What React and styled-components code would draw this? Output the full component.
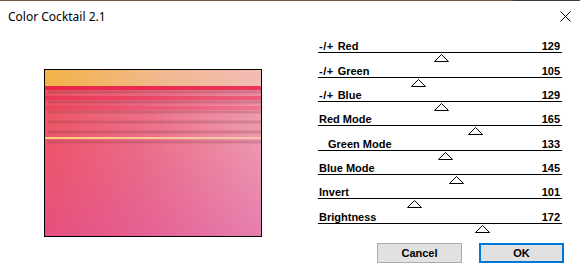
import React from "react";
import styled, { createGlobalStyle } from "styled-components";

const GlobalStyle = createGlobalStyle`
  html, body {
    margin: 0;
    padding: 0;
    background: #ffffff;
  }
  body {
    font-family: "Liberation Sans", Arial, sans-serif;
  }
`;

const Window = styled.div`
  width: 580px;
  height: 273px;
  background: #ffffff;
  display: flex;
  flex-direction: column;
  overflow: hidden;
`;

const TopEdge = styled.div`
  height: 1px;
  background: linear-gradient(to right, #6d5a49 513px, #3d3d3d 513px);
`;

const TitleBar = styled.div`
  height: 31px;
  display: flex;
  align-items: center;
  justify-content: space-between;
  padding: 0 9px 0 8px;
`;

const Title = styled.span`
  font-family: "Noto Sans", "Open Sans", sans-serif;
  font-size: 12px;
  color: #000000;
`;

const CloseIcon = styled.svg`
  width: 11px;
  height: 11px;
  display: block;
`;

const Main = styled.div`
  display: flex;
  align-items: flex-start;
  padding-left: 44px;
  gap: 56px;
`;

// thumbnail of the filtered image: bands and stripes from the effect
const Preview = styled.div`
  margin-top: 37px;
  width: 216px;
  height: 166px;
  border: 1px solid #000000;
  background-image:
    linear-gradient(to right, #f3b246, #f0b98f 55%, #f2bcb6),
    linear-gradient(to right, #fbd07a, #f7c99a 60%, #f4c5b4),
    repeating-linear-gradient(
      to bottom,
      transparent 0px,
      transparent 4px,
      rgba(120, 55, 70, 0.22) 5px,
      rgba(120, 55, 70, 0.26) 6px,
      rgba(120, 55, 70, 0.22) 7px,
      transparent 8px,
      transparent 10px
    ),
    linear-gradient(
      to bottom,
      rgba(232, 20, 60, 0.75) 0px,
      rgba(232, 20, 60, 0.75) 4px,
      rgba(220, 60, 80, 0.15) 4px,
      rgba(220, 60, 80, 0.15) 10px,
      rgba(232, 30, 70, 0.5) 10px,
      rgba(232, 30, 70, 0.5) 14px,
      rgba(232, 30, 70, 0.1) 14px,
      rgba(232, 30, 70, 0.1) 20px,
      rgba(232, 30, 70, 0.3) 20px,
      rgba(232, 30, 70, 0.3) 24px,
      transparent 24px
    ),
    linear-gradient(to bottom, rgba(226, 80, 160, 0) 35%, rgba(214, 70, 170, 0.35)),
    linear-gradient(to right, #ed5565, #ec6e86 45%, #ee9cb0);
  background-size:
    100% 16px,
    100% 2px,
    calc(100% - 3px) 60px,
    100% 30px,
    100% 100%,
    100% 100%;
  background-position:
    0 0,
    0 67px,
    3px 16px,
    0 16px,
    0 0,
    0 0;
  background-repeat: no-repeat;
`;

const Panel = styled.div`
  margin-top: 8px;
  width: 244px;
  display: flex;
  flex-direction: column;
`;

const Sliders = styled.div`
  display: grid;
  grid-template-rows: 25px 24px 24px 25px 24px 24px 25px 24px;
`;

const Slider = styled.div`
  display: flex;
  flex-direction: column;
`;

const Header = styled.div`
  height: 12px;
  display: flex;
  justify-content: space-between;
  align-items: flex-end;
  border-bottom: 1px solid #000000;
  font-size: 11px;
  line-height: 12px;
  font-weight: bold;
  color: #000000;
  padding-right: 2px;
`;

const Label = styled.span`
  padding-left: ${(p) => (p.$indent ? "10px" : "1px")};
`;

const Prefix = styled.span`
  letter-spacing: 0.5px;
  margin-right: 4px;
`;

const Track = styled.div`
  position: relative;
  height: 10px;
`;

const Thumb = styled.svg`
  position: absolute;
  top: 1px;
  width: 15px;
  height: 8px;
  display: block;
`;

const Buttons = styled.div`
  display: flex;
  justify-content: flex-end;
  gap: 17px;
  margin-top: 8px;
  margin-right: -2px;
`;

const Button = styled.button`
  box-sizing: border-box;
  width: 85px;
  height: 20px;
  padding: 0;
  margin: 0;
  background: #e1e1e1;
  border: ${(p) => (p.$primary ? "2px solid #0078d7" : "1px solid #adadad")};
  font-family: "Liberation Sans", Arial, sans-serif;
  font-size: 11px;
  font-weight: bold;
  color: #000000;
`;

const sliders = [
  { prefix: "-/+", label: "Red", value: 129 },
  { prefix: "-/+", label: "Green", value: 105 },
  { prefix: "-/+", label: "Blue", value: 129 },
  { label: "Red Mode", value: 165 },
  { label: "Green Mode", value: 133, indent: true },
  { label: "Blue Mode", value: 145 },
  { label: "Invert", value: 101 },
  { label: "Brightness", value: 172 },
];

function App() {
  return (
    <>
      <GlobalStyle />
      <Window>
        <TopEdge />
        <TitleBar>
          <Title>Color Cocktail 2.1</Title>
          <CloseIcon viewBox="0 0 11 11">
            <path d="M0.5 0.5 L10.5 10.5 M10.5 0.5 L0.5 10.5" stroke="#000" strokeWidth="1" fill="none" />
          </CloseIcon>
        </TitleBar>
        <Main>
          <Preview />
          <Panel>
            <Sliders>
              {sliders.map((s) => (
                <Slider key={s.label}>
                  <Header>
                    <Label $indent={s.indent}>
                      {s.prefix && <Prefix>{s.prefix}</Prefix>}
                      {s.label}
                    </Label>
                    <span>{s.value}</span>
                  </Header>
                  <Track>
                    <Thumb
                      viewBox="0 0 15 8"
                      style={{ left: Math.round(s.value * 0.95 - 6.5) }}
                    >
                      <polygon points="7.5,0.5 14.5,7.5 0.5,7.5" fill="#fff" stroke="#000" strokeWidth="1" />
                    </Thumb>
                  </Track>
                </Slider>
              ))}
            </Sliders>
            <Buttons>
              <Button>Cancel</Button>
              <Button $primary>OK</Button>
            </Buttons>
          </Panel>
        </Main>
      </Window>
    </>
  );
}

export default App;
